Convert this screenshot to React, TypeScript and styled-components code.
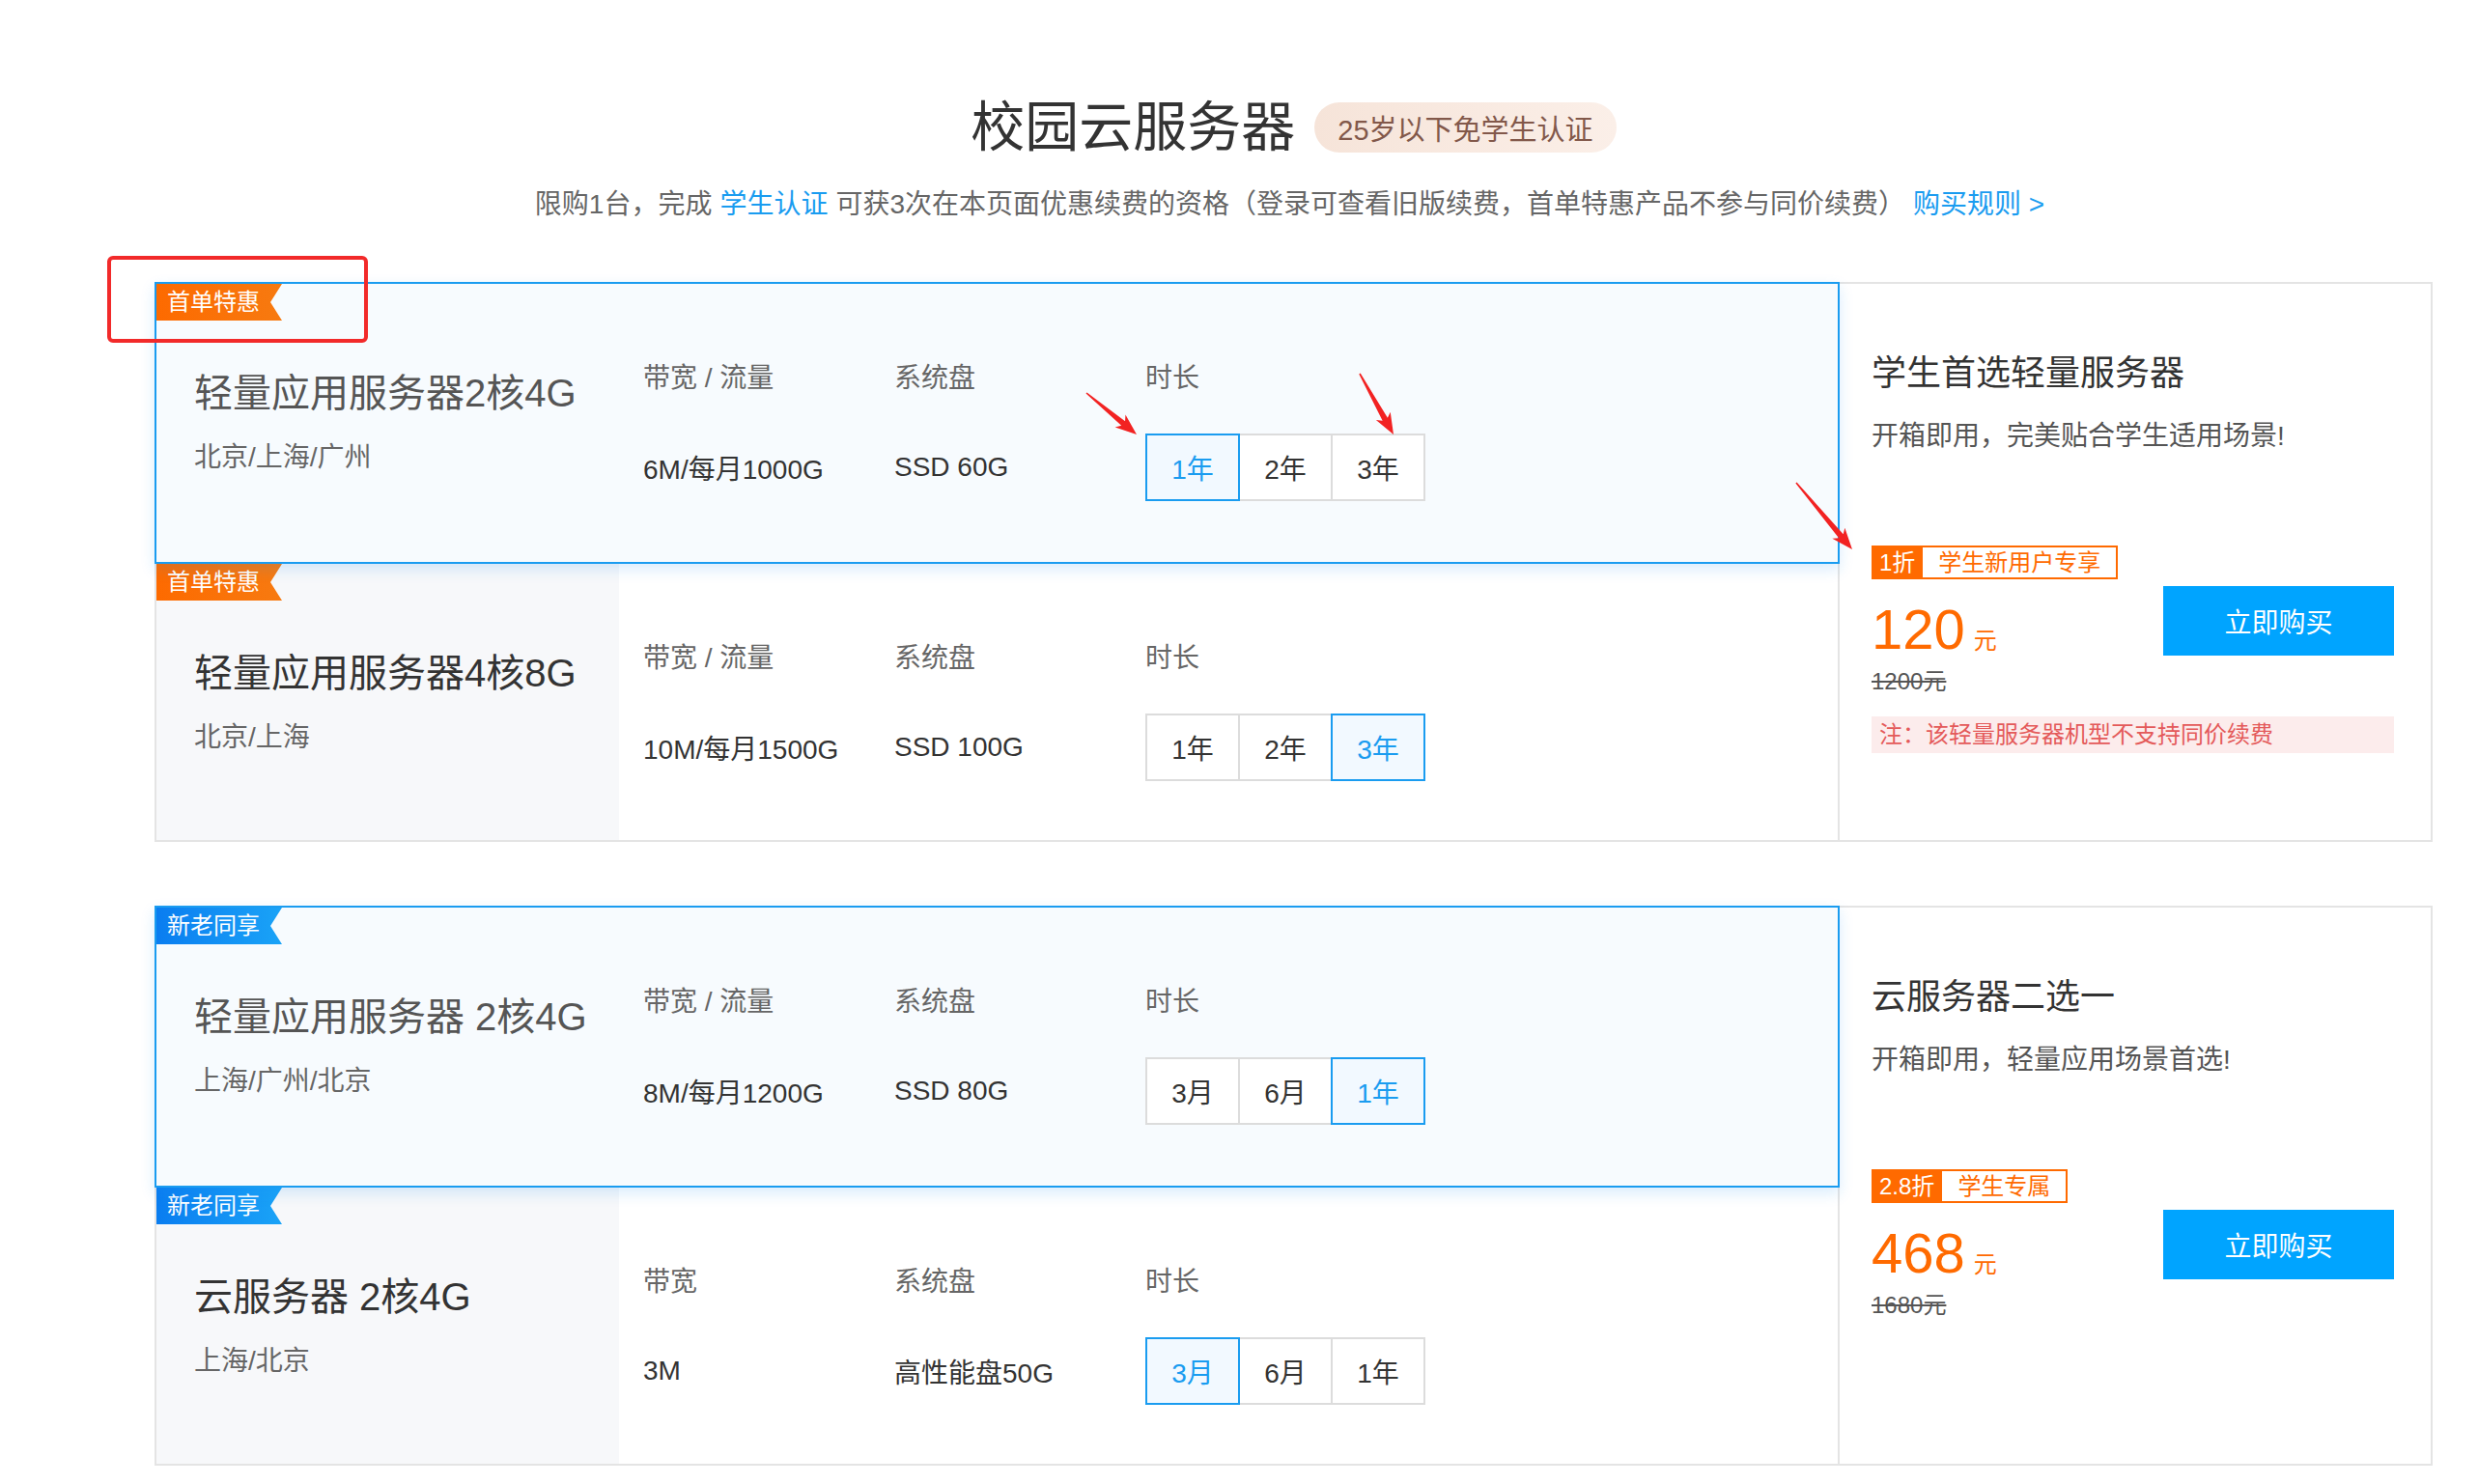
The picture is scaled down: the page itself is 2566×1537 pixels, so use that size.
import * as React from "react";
import styled, { createGlobalStyle, css } from "styled-components";

const GlobalStyle = createGlobalStyle`
  body {
    margin: 0;
    background: #fff;
    font-family: "Liberation Sans", "Noto Sans CJK SC", sans-serif;
    color: #333;
  }
`;

const BLUE = "#1a9cf0";
const ORANGE = "#ff6a00";

const Page = styled.div`
  position: relative;
  width: 2359px;
  padding: 96px 0 22px 160px;
`;

const Header = styled.header`
  display: flex;
  flex-direction: column;
  align-items: center;
`;

const TitleRow = styled.div`
  display: flex;
  align-items: center;
  gap: 20px;
`;

const Title = styled.h1`
  margin: 0;
  font-size: 56px;
  line-height: 72px;
  font-weight: 400;
  color: #333;
`;

const AgeBadge = styled.span`
  display: flex;
  align-items: center;
  height: 52px;
  padding: 0 24px;
  border-radius: 26px;
  background: linear-gradient(90deg, #f6e4d9, #fbefe8);
  color: #82584a;
  font-size: 29px;
`;

const Notice = styled.p`
  margin: 24px 0 0;
  font-size: 28px;
  line-height: 40px;
  color: #666;
`;

const NoticeLink = styled.a`
  color: ${BLUE};
  text-decoration: none;
  margin: 0 8px;
`;

const Section = styled.section<{ $gap: number }>`
  display: flex;
  margin-top: ${(p) => p.$gap}px;
  border: 2px solid #e4e4e4;
`;

const ProductList = styled.div`
  flex: 0 0 1741px;
  display: flex;
  flex-direction: column;
`;

const ProductCard = styled.div<{ $active?: boolean }>`
  position: relative;
  display: flex;
  height: 286px;
  box-sizing: border-box;
  background: #fff;
  ${(p) =>
    p.$active &&
    css`
      z-index: 2;
      height: 292px;
      margin: -2px -2px 0 -2px;
      border: 2px solid ${BLUE};
      background: #f7fbfe;
      box-shadow: 0 6px 14px rgba(24, 144, 240, 0.16);
    `}
`;

const Ribbon = styled.span<{ $tone: "orange" | "blue" }>`
  position: absolute;
  top: 0;
  left: 0;
  width: 130px;
  height: 38px;
  box-sizing: border-box;
  padding-left: 11px;
  font-size: 24px;
  line-height: 38px;
  color: #fff;
  background: ${(p) =>
    p.$tone === "orange"
      ? "linear-gradient(90deg, #fd6a00, #f77a10)"
      : "linear-gradient(90deg, #0a7df0, #1aa3f7)"};
  clip-path: polygon(0 0, 100% 0, calc(100% - 12px) 50%, 100% 100%, 0 100%);
`;

const NameCol = styled.div<{ $active?: boolean }>`
  flex: 0 0 479px;
  box-sizing: border-box;
  padding: 88px 0 0 39px;
  background: ${(p) => (p.$active ? "transparent" : "#f7f8fa")};
`;

const ProductName = styled.div<{ $active?: boolean }>`
  font-size: 40px;
  line-height: 50px;
  color: ${(p) => (p.$active ? "#555" : "#333")};
  white-space: nowrap;
`;

const Region = styled.div`
  margin-top: 24px;
  font-size: 28px;
  line-height: 36px;
  color: #666;
`;

const SpecGrid = styled.div`
  display: grid;
  grid-template-columns: 260px 260px 320px;
  grid-template-rows: 36px 70px;
  row-gap: 39px;
  align-items: center;
  padding: 80px 0 0 25px;
`;

const SpecLabel = styled.div`
  font-size: 28px;
  line-height: 36px;
  color: #666;
`;

const SpecValue = styled.div`
  font-size: 28px;
  color: #333;
`;

const PeriodGroup = styled.div`
  display: flex;
`;

const PeriodButton = styled.button<{ $active?: boolean }>`
  width: 98px;
  height: 70px;
  box-sizing: border-box;
  font-family: inherit;
  font-size: 28px;
  border: 2px solid ${(p) => (p.$active ? BLUE : "#dcdcdc")};
  background: ${(p) => (p.$active ? "#f2f9ff" : "#fff")};
  color: ${(p) => (p.$active ? BLUE : "#333")};
  position: relative;
  z-index: ${(p) => (p.$active ? 1 : 0)};
  cursor: pointer;
  & + & {
    margin-left: -2px;
  }
`;

const Panel = styled.div`
  flex: 1;
  border-left: 2px solid #e4e4e4;
  padding: 68px 38px 0 33px;
`;

const PanelTitle = styled.h3`
  margin: 0;
  font-size: 36px;
  line-height: 50px;
  font-weight: 400;
  color: #333;
`;

const PanelDesc = styled.p`
  margin: 20px 0 0;
  font-size: 28px;
  line-height: 40px;
  color: #555;
`;

const OfferRow = styled.div`
  display: flex;
  justify-content: space-between;
  align-items: flex-start;
  margin-top: 93px;
`;

const OfferInfo = styled.div`
  display: flex;
  flex-direction: column;
  align-items: flex-start;
`;

const DiscountTag = styled.div`
  display: flex;
  height: 35px;
  box-sizing: border-box;
  border: 2px solid ${ORANGE};
  font-size: 24px;
  line-height: 31px;
`;

const TagRate = styled.span`
  padding: 0 8px 0 6px;
  background: ${ORANGE};
  color: #fff;
`;

const TagText = styled.span`
  padding: 0 16px;
  background: #fff;
  color: ${ORANGE};
`;

const Price = styled.div`
  display: flex;
  align-items: baseline;
  margin-top: 20px;
  height: 64px;
  color: ${ORANGE};
`;

const PriceNum = styled.span`
  font-size: 58px;
  line-height: 64px;
`;

const PriceUnit = styled.span`
  margin-left: 9px;
  font-size: 24px;
`;

const OldPrice = styled.div`
  margin-top: 6px;
  font-size: 24px;
  line-height: 32px;
  color: #555;
  text-decoration: line-through;
`;

const BuyButton = styled.button`
  margin-top: 42px;
  width: 239px;
  height: 72px;
  border: none;
  background: #00a4ff;
  color: #fff;
  font-family: inherit;
  font-size: 28px;
  cursor: pointer;
`;

const Note = styled.div`
  margin-top: 20px;
  height: 38px;
  padding: 0 8px;
  background: #fcecec;
  color: #e45a5a;
  font-size: 24px;
  line-height: 38px;
`;

const MarkBox = styled.div`
  position: absolute;
  left: 111px;
  top: 265px;
  width: 270px;
  height: 90px;
  box-sizing: border-box;
  border: 4px solid #f22a2a;
  border-radius: 6px;
  z-index: 5;
  pointer-events: none;
`;

const MarkLayer = styled.svg`
  position: absolute;
  left: 0;
  top: 0;
  z-index: 5;
  pointer-events: none;
`;

type Product = {
  ribbon: string;
  tone: "orange" | "blue";
  name: string;
  region: string;
  bwLabel: string;
  bw: string;
  disk: string;
  periods: string[];
  picked: number;
  active?: boolean;
};

type Offer = {
  title: string;
  desc: string;
  rate: string;
  tag: string;
  price: string;
  old: string;
  note?: string;
};

const groups: { products: Product[]; offer: Offer; gap: number }[] = [
  {
    gap: 60,
    products: [
      {
        ribbon: "首单特惠",
        tone: "orange",
        name: "轻量应用服务器2核4G",
        region: "北京/上海/广州",
        bwLabel: "带宽 / 流量",
        bw: "6M/每月1000G",
        disk: "SSD 60G",
        periods: ["1年", "2年", "3年"],
        picked: 0,
        active: true,
      },
      {
        ribbon: "首单特惠",
        tone: "orange",
        name: "轻量应用服务器4核8G",
        region: "北京/上海",
        bwLabel: "带宽 / 流量",
        bw: "10M/每月1500G",
        disk: "SSD 100G",
        periods: ["1年", "2年", "3年"],
        picked: 2,
      },
    ],
    offer: {
      title: "学生首选轻量服务器",
      desc: "开箱即用，完美贴合学生适用场景!",
      rate: "1折",
      tag: "学生新用户专享",
      price: "120",
      old: "1200元",
      note: "注：该轻量服务器机型不支持同价续费",
    },
  },
  {
    gap: 66,
    products: [
      {
        ribbon: "新老同享",
        tone: "blue",
        name: "轻量应用服务器 2核4G",
        region: "上海/广州/北京",
        bwLabel: "带宽 / 流量",
        bw: "8M/每月1200G",
        disk: "SSD 80G",
        periods: ["3月", "6月", "1年"],
        picked: 2,
        active: true,
      },
      {
        ribbon: "新老同享",
        tone: "blue",
        name: "云服务器 2核4G",
        region: "上海/北京",
        bwLabel: "带宽",
        bw: "3M",
        disk: "高性能盘50G",
        periods: ["3月", "6月", "1年"],
        picked: 0,
      },
    ],
    offer: {
      title: "云服务器二选一",
      desc: "开箱即用，轻量应用场景首选!",
      rate: "2.8折",
      tag: "学生专属",
      price: "468",
      old: "1680元",
    },
  },
];

const arrows = [
  [1125, 407, 1177, 450],
  [1408, 387, 1443, 450],
  [1860, 500, 1918, 569],
];

function arrowPoints(x1: number, y1: number, x2: number, y2: number) {
  const dx = x2 - x1;
  const dy = y2 - y1;
  const len = Math.hypot(dx, dy);
  const ux = dx / len;
  const uy = dy / len;
  const pt = (a: number, b: number) =>
    `${x1 + ux * a - uy * b},${y1 + uy * a + ux * b}`;
  return [
    pt(0, -0.8),
    pt(len - 18, -3),
    pt(len - 22, -8.5),
    pt(len, 0),
    pt(len - 22, 8.5),
    pt(len - 18, 3),
    pt(0, 0.8),
  ].join(" ");
}

function ProductRow({ p }: { p: Product }) {
  return (
    <ProductCard $active={p.active}>
      <Ribbon $tone={p.tone}>{p.ribbon}</Ribbon>
      <NameCol $active={p.active}>
        <ProductName $active={p.active}>{p.name}</ProductName>
        <Region>{p.region}</Region>
      </NameCol>
      <SpecGrid>
        <SpecLabel>{p.bwLabel}</SpecLabel>
        <SpecLabel>系统盘</SpecLabel>
        <SpecLabel>时长</SpecLabel>
        <SpecValue>{p.bw}</SpecValue>
        <SpecValue>{p.disk}</SpecValue>
        <PeriodGroup>
          {p.periods.map((t, i) => (
            <PeriodButton key={t} $active={i === p.picked}>
              {t}
            </PeriodButton>
          ))}
        </PeriodGroup>
      </SpecGrid>
    </ProductCard>
  );
}

function OfferPanel({ o }: { o: Offer }) {
  return (
    <Panel>
      <PanelTitle>{o.title}</PanelTitle>
      <PanelDesc>{o.desc}</PanelDesc>
      <OfferRow>
        <OfferInfo>
          <DiscountTag>
            <TagRate>{o.rate}</TagRate>
            <TagText>{o.tag}</TagText>
          </DiscountTag>
          <Price>
            <PriceNum>{o.price}</PriceNum>
            <PriceUnit>元</PriceUnit>
          </Price>
          <OldPrice>{o.old}</OldPrice>
        </OfferInfo>
        <BuyButton>立即购买</BuyButton>
      </OfferRow>
      {o.note && <Note>{o.note}</Note>}
    </Panel>
  );
}

export default function App() {
  return (
    <>
      <GlobalStyle />
      <Page>
        <Header>
          <TitleRow>
            <Title>校园云服务器</Title>
            <AgeBadge>25岁以下免学生认证</AgeBadge>
          </TitleRow>
          <Notice>
            限购1台，完成<NoticeLink href="#">学生认证</NoticeLink>
            可获3次在本页面优惠续费的资格（登录可查看旧版续费，首单特惠产品不参与同价续费）
            <NoticeLink href="#">购买规则 &gt;</NoticeLink>
          </Notice>
        </Header>

        {groups.map((g, gi) => (
          <Section key={gi} $gap={g.gap}>
            <ProductList>
              {g.products.map((p) => (
                <ProductRow key={p.name} p={p} />
              ))}
            </ProductList>
            <OfferPanel o={g.offer} />
          </Section>
        ))}

        <MarkBox />
        <MarkLayer width={2566} height={1537}>
          {arrows.map(([x1, y1, x2, y2], i) => (
            <polygon key={i} points={arrowPoints(x1, y1, x2, y2)} fill="#f22222" />
          ))}
        </MarkLayer>
      </Page>
    </>
  );
}
